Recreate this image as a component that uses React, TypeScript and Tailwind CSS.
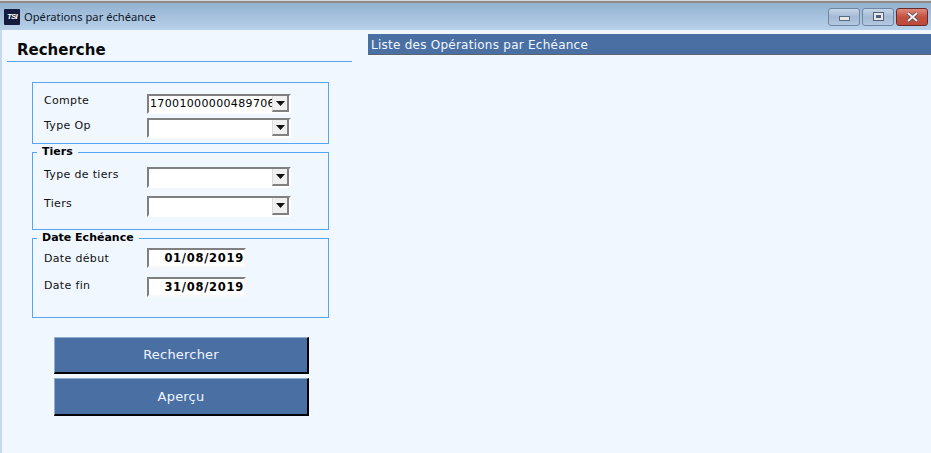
const V = { fontFamily: '"DejaVu Sans", Verdana, sans-serif' };

function Arrow() {
  return (
    <svg width="9" height="5" viewBox="0 0 9 5" className="block">
      <path d="M0 0H9L4.5 5Z" fill="#111" />
    </svg>
  );
}

function Combo({ value, className }: { value?: string; className: string }) {
  return (
    <div className={`flex w-[144px] border-t-2 border-l-2 border-t-[#808080] border-l-[#808080] border-r-2 border-b-2 border-r-white border-b-white bg-white ${className}`}>
      <div className="flex-1 min-w-0 overflow-hidden whitespace-nowrap text-[11px] leading-[15px] pl-[1px] tracking-[0.35px] text-black">{value}</div>
      <div className="flex w-[17px] shrink-0 items-center justify-center bg-[#f0f0f0] border-r-2 border-b-2 border-r-[#808080] border-b-[#808080] border-l border-l-[#dcdcdc]">
        <Arrow />
      </div>
    </div>
  );
}

function DateBox({ value }: { value: string }) {
  return (
    <div className="h-[20px] w-[99px] border-t-2 border-l-2 border-t-[#808080] border-l-[#808080] border-r-2 border-b-2 border-r-[#f8f8f8] border-b-[#f8f8f8] bg-white text-right text-[11.5px] font-bold leading-[16px] tracking-[0.72px] text-black whitespace-nowrap">
      {value}
    </div>
  );
}

function Row({ label, labelShift, className, children }: { label: string; labelShift: string; className: string; children: React.ReactNode }) {
  return (
    <div className={`flex items-start ${className}`}>
      <div className={`w-[114px] shrink-0 pl-[11px] text-[11px] leading-[14px] tracking-[0.33px] text-[#111] ${labelShift}`}>{label}</div>
      {children}
    </div>
  );
}

function Group({ legend, className, children }: { legend?: string; className: string; children: React.ReactNode }) {
  return (
    <fieldset className={`w-[297px] border border-[#55a5f2] ${className}`}>
      {legend && (
        <legend className="ml-[4px] pl-[5px] pr-[5px] text-[11px] font-bold leading-[14px] text-black">{legend}</legend>
      )}
      {children}
    </fieldset>
  );
}

function WinButton({ className, children }: { className: string; children: React.ReactNode }) {
  return (
    <div className={`flex h-[18px] w-[32px] items-center justify-center rounded-[3px] border ${className}`}>{children}</div>
  );
}

function ActionButton({ label, className }: { label: string; className: string }) {
  return (
    <button className={`w-[255px] border-t border-l border-t-[#8fadd0] border-l-[#8fadd0] border-r-2 border-b-2 border-r-black border-b-black bg-[#4a70a3] text-center text-[13px] tracking-[0.2px] text-[#f0f6ff] ${className}`} style={V}>
      {label}
    </button>
  );
}

export default function App() {
  return (
    <div className="flex h-[453px] w-[931px] flex-col overflow-hidden bg-[#f0f7ff]" style={V}>
      <div className="h-[3px] shrink-0 border-t border-t-[#d8d8d8] bg-[#8c8c8c]" />
      <div className="flex h-[27px] shrink-0 items-center justify-between bg-gradient-to-b from-[#93b2d1] to-[#b9d1e9] pl-[4px] pr-[3px]">
        <div className="flex items-center gap-[4px]">
          <div className="flex h-[16px] w-[16px] items-center justify-center overflow-hidden rounded-[1px] bg-[#141b3c] text-[8px] font-bold italic leading-none tracking-[-0.8px] text-white" style={{ fontFamily: '"Liberation Sans", sans-serif' }}>
            TSI
          </div>
          <span className="text-[11.2px] leading-[16px] text-[#10182a]" style={{ fontFamily: '"Noto Sans", sans-serif' }}>
            Opérations par échéance
          </span>
        </div>
        <div className="flex gap-[2px]">
          <WinButton className="border-[#6f86a3] bg-gradient-to-b from-[#c5d6e8] via-[#a3bad4] to-[#b4c9de]">
            <div className="mt-[3px] h-[5px] w-[11px] border border-[#5a6a80] bg-[#e8e8e8]" />
          </WinButton>
          <WinButton className="border-[#6f86a3] bg-gradient-to-b from-[#c5d6e8] via-[#a3bad4] to-[#b4c9de]">
            <div className="flex h-[9px] w-[11px] items-center justify-center border border-[#50607a] bg-[#e8e8e8]">
              <div className="h-[3px] w-[5px] bg-[#50607a]" />
            </div>
          </WinButton>
          <WinButton className="border-[#6b2a2a] bg-gradient-to-b from-[#e0897c] via-[#c4503f] to-[#bd4a3a]">
            <svg width="13" height="10" viewBox="0 0 13 10">
              <path d="M2 1 11 9M11 1 2 9" stroke="#4a4a55" strokeWidth="3.4" />
              <path d="M2 1 11 9M11 1 2 9" stroke="#f0f0f0" strokeWidth="2" />
            </svg>
          </WinButton>
        </div>
      </div>

      <div className="flex flex-1 min-h-0 border-l-2 border-l-[#c6d9ec]">
        <div className="w-[366px] shrink-0 pl-[5px]">
          <div className="mt-[8px] h-[24px] w-[345px] border-b border-b-[#55a5f2] pl-[10px] pt-[2px] text-[15px] font-bold leading-[21px] text-[#0a0a0a]" style={{ fontFamily: '"DejaVu Sans", sans-serif' }}>
            Recherche
          </div>

          <div className="ml-[25px] mt-[20px] flex flex-col">
            <Group className="h-[62px] pt-[11px]">
              <Row label="Compte" labelShift="" className="h-[24px]">
                <Combo value="170010000004897060" className="h-[20px]" />
              </Row>
              <Row label="Type Op" labelShift="mt-[1px]" className="h-[20px]">
                <Combo className="h-[20px]" />
              </Row>
            </Group>
            <Group legend="Tiers" className="mt-[1px] h-[85px] pt-[8px]">
              <Row label="Type de tiers" labelShift="mt-[1px]" className="h-[29px]">
                <Combo className="h-[21px]" />
              </Row>
              <Row label="Tiers" labelShift="mt-[1px]" className="h-[21px]">
                <Combo className="h-[21px]" />
              </Row>
            </Group>
            <Group legend="Date Echéance" className="mt-[1px] h-[87px] pt-[3px]">
              <Row label="Date début" labelShift="mt-[4px]" className="h-[29px]">
                <DateBox value="01/08/2019" />
              </Row>
              <Row label="Date fin" labelShift="mt-[2px]" className="h-[20px]">
                <DateBox value="31/08/2019" />
              </Row>
            </Group>
          </div>

          <div className="ml-[47px] mt-[19px] flex flex-col gap-[4px]">
            <ActionButton label="Rechercher" className="h-[37px] pb-[1px]" />
            <ActionButton label="Aperçu" className="h-[38px]" />
          </div>
        </div>

        <div className="flex-1 min-w-0 pt-[4px]">
          <div className="h-[21px] border-b border-b-[#5c6470] bg-[#4a70a3] pl-[3px] pt-[1px] text-[12px] leading-[20px] tracking-[0.25px] text-[#f2f7ff]">
            Liste des Opérations par Echéance
          </div>
        </div>
      </div>
    </div>
  );
}
